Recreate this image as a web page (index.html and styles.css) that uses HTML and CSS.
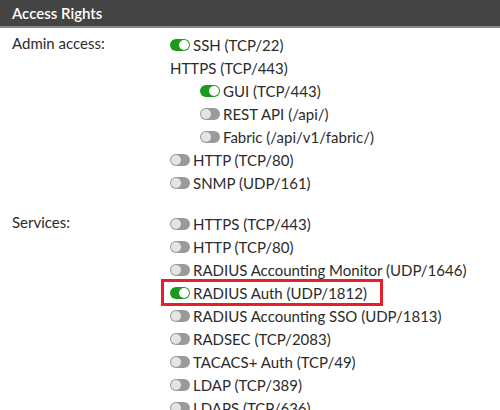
FILE: index.html
```html
<!DOCTYPE html>
<html>
<head>
    <title>Access Rights</title>
    <link rel="stylesheet" href="styles.css">
</head>
<body>

<div class="section-title">Access Rights</div>

<div class="field-row">
    <div class="field-label">Admin access:</div>
    <div class="field-options">
        <div class="option"><span class="toggle on"></span>SSH (TCP/22)</div>
        <div class="option">HTTPS (TCP/443)</div>
        <div class="option nested"><span class="toggle on"></span>GUI (TCP/443)</div>
        <div class="option nested"><span class="toggle"></span>REST API (/api/)</div>
        <div class="option nested"><span class="toggle"></span>Fabric (/api/v1/fabric/)</div>
        <div class="option"><span class="toggle"></span>HTTP (TCP/80)</div>
        <div class="option"><span class="toggle"></span>SNMP (UDP/161)</div>
    </div>
</div>

<div class="field-row services">
    <div class="field-label">Services:</div>
    <div class="field-options">
        <div class="option"><span class="toggle"></span>HTTPS (TCP/443)</div>
        <div class="option"><span class="toggle"></span>HTTP (TCP/80)</div>
        <div class="option"><span class="toggle"></span>RADIUS Accounting Monitor (UDP/1646)</div>
        <div class="option highlight"><span class="toggle on"></span>RADIUS Auth (UDP/1812)</div>
        <div class="option"><span class="toggle"></span>RADIUS Accounting SSO (UDP/1813)</div>
        <div class="option"><span class="toggle"></span>RADSEC (TCP/2083)</div>
        <div class="option"><span class="toggle"></span>TACACS+ Auth (TCP/49)</div>
        <div class="option"><span class="toggle"></span>LDAP (TCP/389)</div>
        <div class="option"><span class="toggle"></span>LDAPS (TCP/636)</div>
    </div>
</div>

</body>
</html>
```

FILE: styles.css
```css
:root {
    --header-bg: #444444;
    --header-line: #8a8a8a;
    --text-color: #2b2b2b;
    --toggle-on: #1c9a1c;
    --toggle-off: #9a9a9a;
    --knob-off: #e4e4e4;
    --mark-red: #e6202a;
}

body {
    margin: 0;
    font-family: Lato, "Open Sans", sans-serif;
    font-size: 15px;
    color: var(--text-color);
    background-color: #ffffff;
    overflow: hidden;
}

.section-title {
    background-color: var(--header-bg);
    color: #ffffff;
    height: 26px;
    line-height: 26px;
    padding-left: 12px;
    font-size: 15px;
    font-weight: 600;
    border-bottom: 2px solid var(--header-line);
}

.field-row {
    display: flex;
    padding-top: 5px;
}

.field-row.services {
    padding-top: 18px;
}

.field-label {
    width: 158px;
    padding-left: 12px;
    line-height: 21px;
}

.field-options {
    display: flex;
    flex-direction: column;
}

.option {
    display: flex;
    align-items: center;
    height: 23px;
    white-space: nowrap;
}

.option.nested {
    padding-left: 30px;
}

.option.highlight {
    outline: 3px solid var(--mark-red);
    outline-offset: -1px;
    margin-left: -7px;
    padding-left: 7px;
    width: 211px;
}

.toggle {
    position: relative;
    display: inline-block;
    width: 20px;
    height: 12px;
    border-radius: 6px;
    background-color: var(--toggle-off);
    margin-right: 3px;
}

.toggle::after {
    content: "";
    position: absolute;
    left: 1px;
    top: 1px;
    width: 10px;
    height: 10px;
    border-radius: 50%;
    background-color: var(--knob-off);
}

.toggle.on {
    background-color: var(--toggle-on);
}

.toggle.on::after {
    left: 9px;
    background-color: #ffffff;
}
```
